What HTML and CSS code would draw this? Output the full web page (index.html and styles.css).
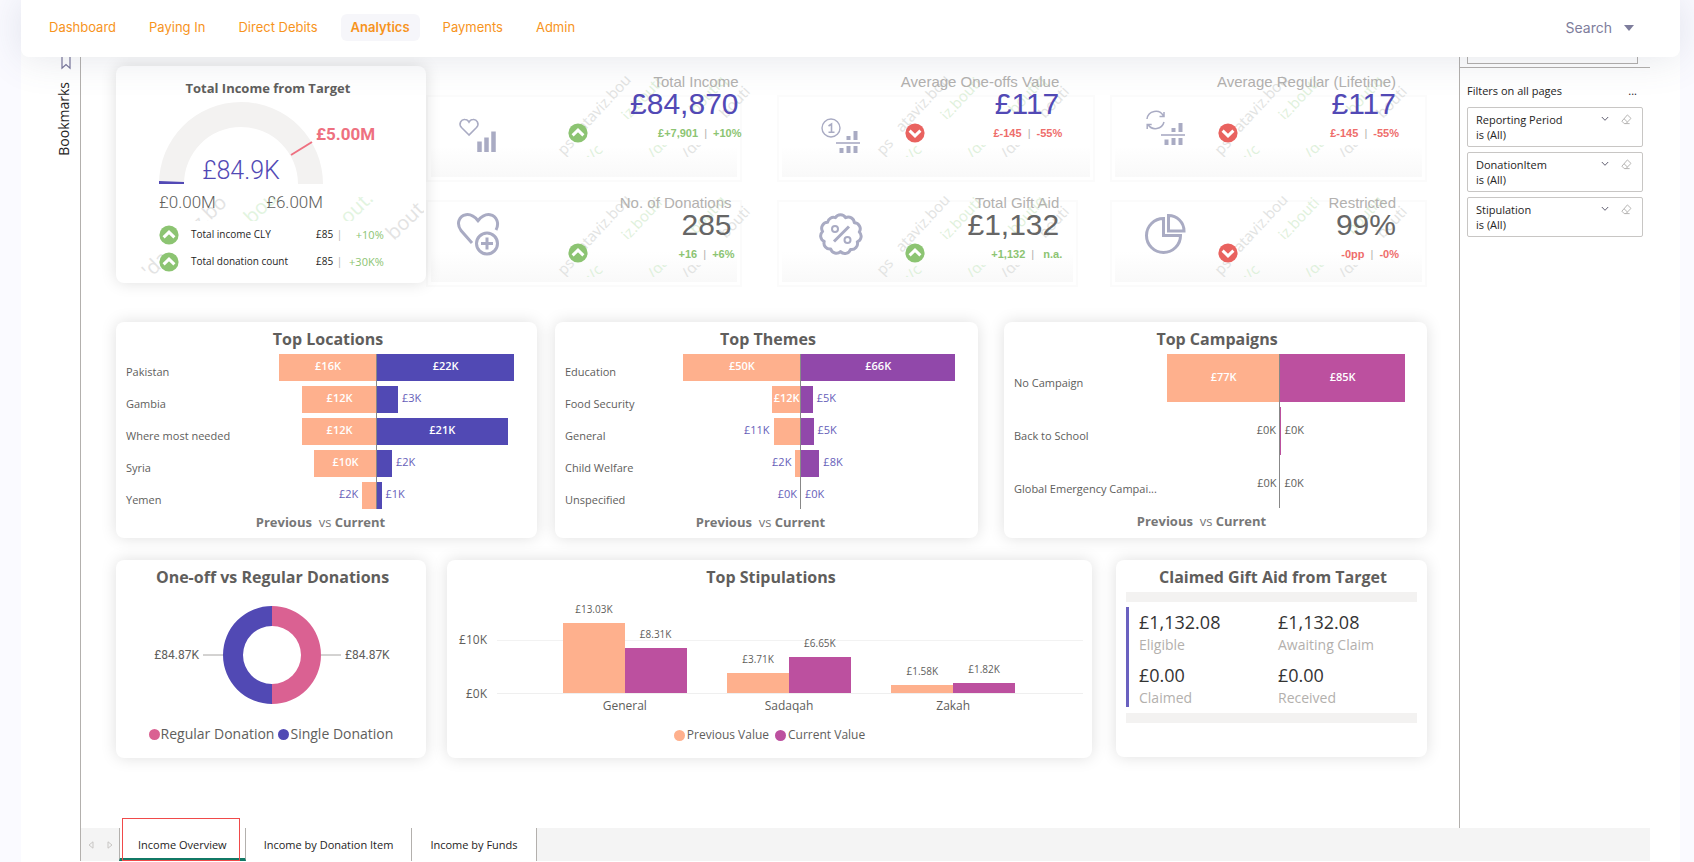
FILE: index.html
```html
<!DOCTYPE html>
<html lang="en">
<head>
<meta charset="utf-8">
<title>Analytics - Income Overview</title>
<meta name="viewport" content="width=device-width, initial-scale=1">
<link rel="stylesheet" href="styles.css">
</head>
<body>
<svg class="defs" aria-hidden="true">
  <symbol id="up" viewBox="0 0 20 20"><circle cx="10" cy="10" r="9.6" fill="#8cc472"/><path d="M4.6 12.4 10 7.2l5.4 5.2" fill="none" stroke="#fff" stroke-width="3"/></symbol>
  <symbol id="down" viewBox="0 0 20 20"><circle cx="10" cy="10" r="9.6" fill="#e9625f"/><path d="M4.6 7.6 10 12.8l5.4-5.2" fill="none" stroke="#fff" stroke-width="3"/></symbol>
  <symbol id="chev" viewBox="0 0 8 6"><path d="M.8 1 4 4.3 7.2 1" fill="none" stroke="#605e70" stroke-width="1"/></symbol>
  <symbol id="eraser" viewBox="0 0 11 11"><path d="M6.4.9 10 4.4 4.9 9.6H3.2L.9 7.2zM3 4.7l3.5 3.4M4.6 9.6h4" fill="none" stroke="#a5a3a1" stroke-width=".8"/></symbol>
  <symbol id="mark" viewBox="0 0 196 84">
    <clipPath id="markclip"><path d="M0 0H196V46H70L40 84H0zM0 72H150V84H0z"/></clipPath>
    <g clip-path="url(#markclip)" font-family="Open Sans, sans-serif" font-size="15">
      <g fill="#e2e3e2"><text transform="translate(6 83) rotate(-47)">ps</text><text transform="translate(25 60) rotate(-47)">ataviz.bou</text><text transform="translate(130 86) rotate(-47)">/da</text><text transform="translate(168 46) rotate(-47)">bouti</text></g>
      <g fill="#dff1dc"><text transform="translate(34 90) rotate(-47)">:/c</text><text transform="translate(70 48) rotate(-47)">iz.bouti</text><text transform="translate(96 86) rotate(-47)">/da</text><text transform="translate(138 42) rotate(-47)">boutiq</text></g>
    </g>
  </symbol>
</svg>

<div class="shell">
  <header class="topbar">
    <nav class="nav">
      <a href="#">Dashboard</a><a href="#">Paying In</a><a href="#">Direct Debits</a><a href="#" class="active" aria-current="page">Analytics</a><a href="#">Payments</a><a href="#">Admin</a>
    </nav>
    <button class="search" type="button">Search <svg width="10" height="6" viewBox="0 0 10 6"><path d="M0 0h10L5 6z" fill="#7e7d9c"/></svg></button>
  </header>

  <div class="work">
    <aside class="bookmarks">
      <svg width="12" height="13" viewBox="0 0 12 13"><path d="M2 0v11.2L6 7.6l4 3.6V0" fill="none" stroke="#77759a" stroke-width="1.2"/></svg>
      <span>Bookmarks</span>
    </aside>

    <div class="report">
      <div class="stage">
        <main class="canvas">
          <section class="row top">
            <article class="card income">
              <svg class="bigmark" width="284" height="80" viewBox="0 0 284 80" aria-hidden="true">
                <clipPath id="bm"><path d="M50 0H284V24H50zM0 42H46V80H0zM244 0H284V50H244z"/></clipPath>
                <g clip-path="url(#bm)" font-family="Open Sans, sans-serif" font-size="20"><g fill="#e3e3e3"><text transform="translate(10 82) rotate(-44)">'da</text><text transform="translate(60 34) rotate(-44)">z.bo</text><text transform="translate(254 44) rotate(-44)">bout</text></g><g fill="#e2f4df"><text transform="translate(112 28) rotate(-44)">bou</text><text transform="translate(208 28) rotate(-44)">out.</text></g></g>
              </svg>
              <h2>Total Income from Target</h2>
              <div class="gauge">
                <svg width="166" height="84" viewBox="0 0 166 84"><path d="M1 83a82 82 0 0 1 164 0h-25a57 57 0 0 0-114 0z" fill="#f3f2f1"/><path d="M1 80 26 81v2H1z" fill="#5249b5"/><path d="M133 54 154 41" stroke="#ee7080" stroke-width="2"/></svg>
                <b>£84.9K</b><strong>£5.00M</strong>
              </div>
              <div class="range"><span>£0.00M</span><span>£6.00M</span></div>
              <ul class="lines">
                <li><svg><use href="#up"/></svg><span>Total income CLY</span><span class="n">£85 <i>|</i></span><em>+10%</em></li>
                <li><svg><use href="#up"/></svg><span>Total donation count</span><span class="n">£85 <i>|</i></span><em>+30K%</em></li>
              </ul>
            </article>

            <article class="kpi a first">
              <svg class="mark" aria-hidden="true"><use href="#mark"/></svg>
              <svg class="ico" width="42" height="36" viewBox="0 0 42 36" fill="none" stroke="#a9abc3"><path d="M13 17 5.500 9.500C2 5.500 5.500 1 9 1.500c2 0 3.300 1.300 4 2.600.7-1.300 2-2.600 4-2.600C20.500 1 24 5.500 20.500 9.500z" stroke-width="1.600"/><path d="M23.500 34V23.500M30.500 34V19.500M37.500 34V13.500" stroke-width="4.500"/></svg>
              <svg class="arrow"><use href="#up"/></svg>
              <div class="fig"><h3>Total Income</h3><p class="blue">£84,870</p><div class="good">£+7,901 <i>|</i> +10%</div></div>
            </article>
            <article class="kpi b first">
              <svg class="mark" aria-hidden="true"><use href="#mark"/></svg>
              <svg class="ico" width="42" height="36" viewBox="0 0 42 36" fill="none" stroke="#a9abc3"><circle cx="12" cy="10" r="9" stroke-width="1.400"/><path d="M9.500 8 12.500 6v8.500M9.500 14.200h6" stroke-width="1.600"/><path d="M17 25h24" stroke-width="1.600"/><path d="M22.500 30v5M29.500 28v7M36.500 28v7M29.500 22v-4M36.500 22v-9" stroke-width="4"/></svg>
              <svg class="arrow"><use href="#down"/></svg>
              <div class="fig"><h3>Average One-offs Value</h3><p class="blue">£117</p><div class="bad">£-145 <i>|</i> -55%</div></div>
            </article>
            <article class="kpi c first">
              <svg class="mark" aria-hidden="true"><use href="#mark"/></svg>
              <svg class="ico raised" width="42" height="36" viewBox="0 0 42 36" fill="none" stroke="#a9abc3"><path d="M2 9a8.800 8.800 0 0 1 16.500-3M19 12A8.800 8.800 0 0 1 3 14.500M19 2v4.500h-4.500M2.200 19v-4.500h4.500" stroke-width="1.500"/><path d="M16 25h24" stroke-width="1.600"/><path d="M21.500 29.500v5.500M28.500 28v7M35.500 28v7M28.500 22v-4M35.500 22v-9" stroke-width="4"/></svg>
              <svg class="arrow"><use href="#down"/></svg>
              <div class="fig"><h3>Average Regular (Lifetime)</h3><p class="blue">£117</p><div class="bad">£-145 <i>|</i> -55%</div></div>
            </article>

            <article class="kpi a second">
              <svg class="mark" aria-hidden="true"><use href="#mark"/></svg>
              <svg class="ico" width="44" height="44" viewBox="0 0 44 44" fill="none" stroke="#a9abc3" stroke-width="3"><path d="M16 31 5 18.500C0 11.500 3 4 10 2.700c5.500-.8 9 2.300 12 6 3-3.700 6.500-6.800 12-6C41 4 43.500 11.500 40 18"/><circle cx="31" cy="31.500" r="10.500"/><path d="M31 25.500v12M25 31.500h12"/></svg>
              <svg class="arrow"><use href="#up"/></svg>
              <div class="fig"><h3>No. of Donations</h3><p>285</p><div class="good">+16 <i>|</i> +6%</div></div>
            </article>
            <article class="kpi b second">
              <svg class="mark" aria-hidden="true"><use href="#mark"/></svg>
              <svg class="ico" width="44" height="44" viewBox="0 0 44 44" fill="none" stroke="#a9abc3" stroke-width="3"><path d="M16.400 5.700a6 6 0 0 1 10.200 0a6 6 0 0 1 8.700 5.100a6 6 0 0 1 5 9.200a6 6 0 0 1-2 9.900a6 6 0 0 1-6.800 7.600a6 6 0 0 1-10 2.100a6 6 0 0 1-9.800-2.600a6 6 0 0 1-6.500-7.600a6 6 0 0 1-1.600-9.900a6 6 0 0 1 5-9.200a6 6 0 0 1 7.800-4.600z" stroke-linejoin="round"/><path d="M15 29.500 30 14.500"/><circle cx="16" cy="17" r="3" stroke-width="2"/><circle cx="28.500" cy="28" r="3" stroke-width="2"/></svg>
              <svg class="arrow"><use href="#up"/></svg>
              <div class="fig"><h3>Total Gift Aid</h3><p>£1,132</p><div class="good">+1,132 <i>|</i> &nbsp;n.a.</div></div>
            </article>
            <article class="kpi c second">
              <svg class="mark" aria-hidden="true"><use href="#mark"/></svg>
              <svg class="ico" width="44" height="44" viewBox="0 0 44 44" fill="none" stroke="#a9abc3" stroke-width="3"><path d="M18.500 6.500a17 17 0 1 0 17 17h-17z"/><path d="M23.500 3.500v15.500h15.500A15.500 15.500 0 0 0 23.500 3.500z"/></svg>
              <svg class="arrow"><use href="#down"/></svg>
              <div class="fig"><h3>Restricted</h3><p>99%</p><div class="bad">-0pp <i>|</i> -0%</div></div>
            </article>
          </section>

          <section class="row middle">
            <article class="card tornado loc">
              <h2>Top Locations</h2>
              <div class="bars">
                <div class="r"><span>Pakistan</span><div class="p"><b style="width:70%">£16K</b></div><div class="q"><b style="width:91.500%">£22K</b></div></div>
                <div class="r"><span>Gambia</span><div class="p"><b style="width:53.500%">£12K</b></div><div class="q"><b style="width:14%"></b><em>£3K</em></div></div>
                <div class="r"><span>Where most needed</span><div class="p"><b style="width:53.500%">£12K</b></div><div class="q"><b style="width:87%">£21K</b></div></div>
                <div class="r"><span>Syria</span><div class="p"><b style="width:45%">£10K</b></div><div class="q"><b style="width:10%"></b><em>£2K</em></div></div>
                <div class="r"><span>Yemen</span><div class="p"><b style="width:10.500%"></b><em>£2K</em></div><div class="q"><b style="width:3%"></b><em>£1K</em></div></div>
              </div>
              <div class="vs"><b>Previous</b> &nbsp;vs <b>Current</b></div>
            </article>
            <article class="card tornado theme">
              <h2>Top Themes</h2>
              <div class="bars">
                <div class="r"><span>Education</span><div class="p"><b style="width:94.500%">£50K</b></div><div class="q"><b style="width:92.500%">£66K</b></div></div>
                <div class="r"><span>Food Security</span><div class="p"><b style="width:23%">£12K</b></div><div class="q"><b style="width:7%"></b><em>£5K</em></div></div>
                <div class="r"><span>General</span><div class="p"><b style="width:22%"></b><em>£11K</em></div><div class="q"><b style="width:7.500%"></b><em>£5K</em></div></div>
                <div class="r"><span>Child Welfare</span><div class="p"><b style="width:4.500%"></b><em>£2K</em></div><div class="q"><b style="width:11%"></b><em>£8K</em></div></div>
                <div class="r"><span>Unspecified</span><div class="p"><b style="width:0"></b><em>£0K</em></div><div class="q"><b style="width:0"></b><em>£0K</em></div></div>
              </div>
              <div class="vs"><b>Previous</b> &nbsp;vs <b>Current</b></div>
            </article>
            <article class="card tornado camp">
              <h2>Top Campaigns</h2>
              <div class="bars">
                <div class="r"><span>No Campaign</span><div class="p"><b style="width:91%">£77K</b></div><div class="q"><b style="width:91.500%">£85K</b></div></div>
                <div class="r"><span>Back to School</span><div class="p"><b style="width:0"></b><em>£0K</em></div><div class="q"><b style="width:0.500%"></b><em>£0K</em></div></div>
                <div class="r"><span>Global Emergency Campai...</span><div class="p"><b style="width:0"></b><em>£0K</em></div><div class="q"><b style="width:0"></b><em>£0K</em></div></div>
              </div>
              <div class="vs"><b>Previous</b> &nbsp;vs <b>Current</b></div>
            </article>
          </section>

          <section class="row bottom">
            <article class="card donut">
              <h2>One-off vs Regular Donations</h2>
              <div class="ring"><span>£84.87K</span><svg width="138" height="100" viewBox="0 0 138 100"><path d="M0 50h20M118 50h20" stroke="#a8a6a4"/><path d="M69 1a49 49 0 0 1 0 98V79a29 29 0 0 0 0-58z" fill="#da6192"/><path d="M69 1a49 49 0 0 0 0 98V79a29 29 0 0 1 0-58z" fill="#5149b4"/></svg><span>£84.87K</span></div>
              <div class="legend"><span class="pink">Regular Donation</span><span class="indigo">Single Donation</span></div>
            </article>
            <article class="card stip">
              <h2>Top Stipulations</h2>
              <div class="plot">
                <div class="yaxis"><span>£10K</span><span>£0K</span></div>
                <div class="area">
                  <div class="pair"><div><em>£13.03K</em><b style="height:70px"></b></div><div><em>£8.31K</em><b style="height:45px"></b></div></div>
                  <div class="pair"><div><em>£3.71K</em><b style="height:20px"></b></div><div><em>£6.65K</em><b style="height:36px"></b></div></div>
                  <div class="pair"><div><em>£1.58K</em><b style="height:8px"></b></div><div><em>£1.82K</em><b style="height:10px"></b></div></div>
                </div>
                <div class="xaxis"><span>General</span><span>Sadaqah</span><span>Zakah</span></div>
              </div>
              <div class="legend small"><span class="peach">Previous Value</span><span class="magenta">Current Value</span></div>
            </article>
            <article class="card claim">
              <h2>Claimed Gift Aid from Target</h2>
              <hr>
              <dl>
                <div><dd>£1,132.08</dd><dt>Eligible</dt></div><div><dd>£1,132.08</dd><dt>Awaiting Claim</dt></div>
                <div><dd>£0.00</dd><dt>Claimed</dt></div><div><dd>£0.00</dd><dt>Received</dt></div>
              </dl>
              <hr>
            </article>
          </section>
        </main>

        <aside class="filters">
          <div class="stub"><input type="text" aria-label="Search filters"></div>
          <div class="fhead"><span>Filters on all pages</span><button type="button" aria-label="More options">...</button></div>
          <div class="filter"><div>Reporting Period<br>is (All)</div><button type="button" aria-label="Expand Reporting Period"><svg width="8" height="6"><use href="#chev"/></svg></button><button type="button" aria-label="Clear Reporting Period"><svg width="11" height="11"><use href="#eraser"/></svg></button></div>
          <div class="filter"><div>DonationItem<br>is (All)</div><button type="button" aria-label="Expand DonationItem"><svg width="8" height="6"><use href="#chev"/></svg></button><button type="button" aria-label="Clear DonationItem"><svg width="11" height="11"><use href="#eraser"/></svg></button></div>
          <div class="filter"><div>Stipulation<br>is (All)</div><button type="button" aria-label="Expand Stipulation"><svg width="8" height="6"><use href="#chev"/></svg></button><button type="button" aria-label="Clear Stipulation"><svg width="11" height="11"><use href="#eraser"/></svg></button></div>
        </aside>
      </div>

      <footer class="tabs">
        <button class="step" type="button" aria-label="Previous page"><svg width="6" height="8" viewBox="0 0 6 8"><path d="M5 .8v6.400L1 4z" fill="none" stroke="#c8c6c4"/></svg></button>
        <button class="step" type="button" aria-label="Next page"><svg width="6" height="8" viewBox="0 0 6 8"><path d="M1 .8v6.400L5 4z" fill="none" stroke="#c8c6c4"/></svg></button>
        <button class="tab on" type="button">Income Overview</button><button class="tab" type="button">Income by Donation Item</button><button class="tab" type="button">Income by Funds</button>
      </footer>
    </div>
  </div>
</div>
</body>
</html>
```

FILE: styles.css
```css
* { box-sizing: border-box; }
body { margin: 0; background: #fafaff; font-family: "Open Sans", "Noto Sans", sans-serif; color: #605e5c; }
h2, h3, p, ul, dl, dd { margin: 0; padding: 0; }
button { border: 0; background: none; padding: 0; font: inherit; color: inherit; }
i, em { font-style: normal; }
.defs { position: absolute; width: 0; height: 0; }

.shell { margin: 0 14px 0 21px; min-height: 100vh; background: #fff; display: flex; flex-direction: column; }
.topbar { height: 57px; background: #fff; border-radius: 0 0 8px 8px; display: flex; justify-content: space-between; align-items: center; padding: 0 46px 2px 18px; box-shadow: 0 0 40px rgba(82, 92, 125, .16); position: relative; z-index: 2; }
.nav { display: flex; gap: 13px; font: 13px/27px Inter, sans-serif; }
.nav a { color: #f7941d; text-decoration: none; padding: 0 10px; border-radius: 6px; }
.nav .active { background: #f6f6fa; font-weight: 600; }
.search { display: flex; align-items: center; gap: 12px; font: 14px/20px Inter, sans-serif; color: #7e7d9c; }

.work { flex: 1; display: flex; padding-right: 30px; }
.bookmarks { width: 59px; padding: 0 8px 0 0; display: flex; flex-direction: column; align-items: flex-end; gap: 12px; color: #252423; font-size: 14px; line-height: 16px; }
.bookmarks span { writing-mode: vertical-rl; transform: rotate(180deg); }
.report { flex: 1; min-width: 0; display: flex; flex-direction: column; border-left: 1px solid #b3b0ad; margin-bottom: 1px; }
.stage { flex: 1; display: flex; }
.canvas { flex: 1; min-width: 0; padding: 9px 32px 60px 35px; display: flex; flex-direction: column; }
.card { background: #fff; border-radius: 8px; box-shadow: 0 0 16px rgba(0, 0, 0, .13); text-align: center; position: relative; }
.card h2 { font-size: 16px; line-height: 22px; font-weight: 700; color: #605e5c; padding-left: 3px; }

.row { display: grid; }
.top { grid-template-columns: minmax(0, 310fr) minmax(0, 316fr) minmax(0, 36fr) minmax(0, 318fr) minmax(0, 15fr) minmax(0, 317fr); grid-template-rows: 120px 101px; }
.income { grid-row: 1 / 3; height: 217px; padding-top: 12px; z-index: 1; }
.card.income h2 { font-size: 13px; line-height: 20px; padding: 0 6px 0 0; }
.gauge { position: relative; margin: 3px 0 0 42px; width: 166px; height: 84px; }
.gauge b { position: absolute; left: 0; right: 0; bottom: 0; font: 300 25px/28px Roboto, sans-serif; color: #5249b5; }
.gauge strong { position: absolute; left: 158px; top: 22px; font: 700 17px/22px Roboto, sans-serif; color: #ee7080; }
.range { position: relative; display: flex; justify-content: space-between; width: 164px; margin: 7px 0 9px 43px; font: 300 17px/20px Roboto, sans-serif; color: #605e5c; }
.bigmark { position: absolute; left: 24px; bottom: 6px; }
.lines { position: relative; list-style: none; margin: 0 42px 0 43px; font-size: 10px; line-height: 27px; color: #252423; }
.lines li { display: grid; grid-template-columns: 32px 125px 28px 1fr; align-items: center; text-align: left; white-space: nowrap; }
.lines svg { width: 20px; height: 20px; }
.lines em { text-align: right; color: #8cc472; font-size: 11px; }
.lines i, .fig i { color: #b3b0ad; font-weight: 400; padding: 0 3px; }
.lines i { padding: 0 1px; }

.kpi { position: relative; display: grid; grid-template-columns: 142px 20px minmax(0, 1fr); align-items: start; }
.kpi::before { content: ""; position: absolute; inset: 29px 0 4px 0; border: 2px solid #fbfbfb; background: linear-gradient(#fff 60%, #f9f9f9) content-box; padding: 3px; }
.kpi.second::before { inset: 14px 0 0 0; }
.a { grid-column: 2; }
.b { grid-column: 4; grid-template-columns: 128px 20px minmax(0, 1fr); padding-right: 33px; }
.c { grid-column: 6; grid-template-columns: 108px 20px minmax(0, 1fr); padding-right: 28px; }
.a.second { padding-right: 7px; }
.b.second::before { right: 17px; }
.mark { position: absolute; right: 0; top: 7px; width: 196px; height: 84px; }
.a .mark { right: -12px; }
.b .mark { right: 22px; }
.c .mark { right: 16px; }
.ico { position: relative; margin: 52px 0 0 30px; }
.b .ico { margin-left: 42px; }
.c .ico { margin-left: 35px; }
.kpi .raised { margin-top: 44px; }
.second .ico { margin-top: 26px; }
.arrow { position: relative; width: 20px; height: 20px; margin-top: 57px; }
.fig { position: relative; display: flex; flex-direction: column; align-items: flex-end; padding-top: 7px; font-family: "Liberation Sans", Arial, sans-serif; white-space: nowrap; }
.second .fig { padding-top: 8px; }
.fig h3 { font-size: 15px; line-height: 18px; font-weight: 400; color: #b3b1af; margin-right: 3px; }
.fig p { font-size: 30px; line-height: 26px; color: #666; margin-right: 3px; }
.fig .blue { color: #5249b5; }
.fig div { font-size: 11px; line-height: 14px; font-weight: 700; margin-top: 9px; }
.good { color: #8cc472; }
.bad { color: #ee6d6b; }

.middle { grid-template-columns: 421fr 18fr 423fr 26fr 423fr; margin-top: 35px; }
.theme { grid-column: 3; }
.camp { grid-column: 5; }
.tornado { height: 216px; padding: 6px 10px 0; }
.bars { display: grid; gap: 5px; margin-top: 4px; font-size: 11px; line-height: 16px; }
.r { display: grid; height: 27px; text-align: left; }
.loc .r { grid-template-columns: 111fr 140fr 150fr; }
.theme .r { grid-template-columns: 111fr 125fr 167fr; }
.camp .r { grid-template-columns: 142fr 124fr 137fr; height: 48px; }
.r > span { white-space: nowrap; padding-top: 10px; font-size: 11px; }
.camp .r > span { padding-top: 21px; }
.p, .q { display: flex; align-items: stretch; }
.p { flex-direction: row-reverse; position: relative; }
.p::after { content: ""; position: absolute; right: 0; top: 0; bottom: -5px; width: 1px; background: #888; }
.r:last-child .p::after { bottom: 0; }
.r b { font-weight: 600; color: #fff; text-align: center; padding-top: 4px; overflow: hidden; white-space: nowrap; }
.r em { padding: 4px 4px 0; color: #665eb9; }
.camp .r b, .camp .r em { padding-top: 15px; }
.camp .r em { color: #605e5c; }
.p b { background: #feb08d; }
.loc .q b { background: #5149b4; }
.theme .q b { background: #9148aa; }
.camp .q b { background: #bc509f; }
.vs { margin-top: 3px; padding-right: 12px; font-size: 13px; line-height: 20px; color: #777; }
.camp .vs { padding-right: 28px; }

.bottom { grid-template-columns: 310fr 21fr 645fr 24fr 311fr; margin-top: 22px; }
.stip { grid-column: 3; }
.claim { grid-column: 5; padding: 6px 10px 0; }
.donut, .stip { height: 198px; padding-top: 6px; }
.claim { height: 197px; }
.ring { display: flex; justify-content: center; align-items: center; gap: 4px; margin-top: 17px; padding-left: 2px; font: 12px/16px Roboto, sans-serif; }
.legend { display: flex; justify-content: center; gap: 4px; font-size: 14px; line-height: 20px; margin-top: 19px; }
.legend span { display: flex; align-items: center; gap: 1px; }
.legend span::before { content: ""; width: 11px; height: 11px; border-radius: 50%; background: #da6192; }
.legend .indigo::before { background: #5149b4; }
.legend .peach::before { background: #feb08d; }
.legend .magenta::before { background: #bc509f; }
.legend.small { font-size: 12px; margin-top: 10px; gap: 6px; }
.legend.small span { gap: 2px; }
.plot { display: grid; grid-template-columns: 40px 1fr; column-gap: 10px; margin: 8px 9px 0 0; }
.yaxis { font-size: 12px; line-height: 16px; text-align: right; display: flex; flex-direction: column; justify-content: flex-end; gap: 38px; margin-bottom: -8px; }
.area { height: 98px; border-bottom: 1px solid #efefef; background: linear-gradient(#f2f2f2, #f2f2f2) 0 44px / 100% 1px no-repeat; }
.area, .xaxis { display: grid; grid-template-columns: repeat(3, 1fr); column-gap: 9%; padding: 0 68px 0 66px; }
.pair { display: grid; grid-template-columns: 1fr 1fr; align-items: end; }
.pair em { display: block; font-size: 10px; line-height: 14px; margin-bottom: 7px; }
.pair b { display: block; background: #feb08d; }
.pair div + div b { background: #bc509f; }
.xaxis { grid-column: 2; font-size: 12px; line-height: 18px; margin-top: 3px; }
.claim hr { border: 0; height: 10px; margin: 4px 0 5px; background: #f3f2f1; }
.claim dl { display: grid; grid-template-columns: 1fr 1fr; border-left: 3px solid #6a61c0; padding-left: 10px; height: 100px; text-align: left; align-content: start; margin-bottom: 6px; }
.claim dl div { display: flex; flex-direction: column; height: 53px; padding-top: 3px; }
.claim dd { font-size: 18px; line-height: 24px; color: #333; }
.claim dt { font-size: 14px; line-height: 22px; color: #b3b0ad; }

.filters { width: 191px; border-left: 1px solid #b3b0ad; color: #252423; font-size: 11px; line-height: 15px; }
.stub { height: 11px; padding: 0 12px 4px 7px; border-bottom: 1px solid #b3b0ad; }
.stub input { display: block; width: 100%; height: 7px; border: 1px solid #b3b0ad; border-top: 0; padding: 0; background: #fff; }
.fhead { display: flex; justify-content: space-between; padding: 15px 13px 9px 7px; }
.filter { display: flex; align-items: flex-start; gap: 12px; height: 40px; margin: 0 7px 5px 7px; padding: 4px 10px 0 8px; border: 1px solid #c8c6c4; border-radius: 2px; }
.filter div { flex: 1; }
.filter button { height: 14px; display: flex; align-items: center; }

.tabs { height: 33px; display: flex; background: #f4f4f4; font-size: 11px; color: #252423; }
.step { width: 19px; display: flex; align-items: center; justify-content: center; }
.tab { position: relative; background: #fff; border-right: 1px solid #b3b0ad; padding: 0 18px; }
.on { font-weight: 500; border-left: 1px solid #b3b0ad; border-bottom: 3px solid #117865; padding-top: 3px; }
.on::after { content: ""; position: absolute; left: 2px; right: 5px; top: -10px; bottom: -3px; border: 1px solid #f04a4a; }
```
